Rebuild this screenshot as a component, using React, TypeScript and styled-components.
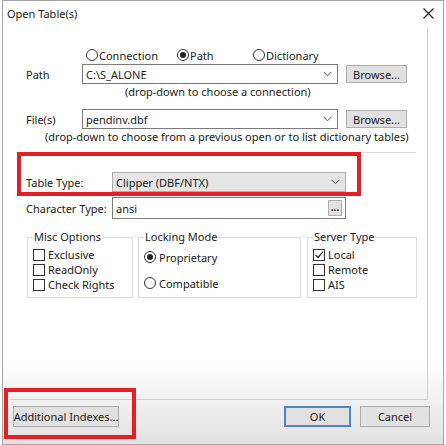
import React from 'react';
import styled, { createGlobalStyle } from 'styled-components';

const Global = createGlobalStyle`
  html, body { margin: 0; padding: 0; background: #fff; }
  body { font-family: "Noto Sans", "Open Sans", sans-serif; font-size: 11px; color: #1b1b1b; }
  * { box-sizing: border-box; }
`;

const Window = styled.div`
  position: relative;
  margin-left: 2px;
  width: 442px;
  height: 445px;
  border: 1px solid #a5a5a5;
  background: linear-gradient(to bottom, #fff 0, #fff 360px, #e1e1e1 444px);
  display: flex;
  flex-direction: column;
`;

const TitleBar = styled.div`
  height: 27px;
  display: flex;
  align-items: center;
  justify-content: space-between;
  padding: 0 9px 3px 4px;
  font-size: 11px;
`;

const Body = styled.div`
  display: flex;
  padding-left: 7px;
`;

const Panel = styled.div`
  width: 418px;
  height: 372px;
  border-right: 1px solid #cfcfcf;
  border-bottom: 1px solid #cfcfcf;
  display: flex;
  flex-direction: column;
`;

const RadioRow = styled.div`
  display: flex;
  align-items: center;
  height: 16px;
  margin-top: 19px;
  padding-left: 76px;
`;

const Option = styled.label<{ $w?: number }>`
  display: flex;
  align-items: center;
  gap: 1px;
  width: ${p => (p.$w ? `${p.$w}px` : 'auto')};
  height: 16px;
  white-space: nowrap;
`;

const Circle = styled.span<{ $on?: boolean }>`
  position: relative;
  width: 12px;
  height: 12px;
  border-radius: 50%;
  border: 1px solid #333;
  background: #fff;
  flex: none;
  &::after {
    content: '';
    display: ${p => (p.$on ? 'block' : 'none')};
    position: absolute;
    left: 2px;
    top: 2px;
    width: 6px;
    height: 6px;
    border-radius: 50%;
    background: #222;
  }
`;

const Box = styled.span`
  width: 12px;
  height: 12px;
  border: 1px solid #333;
  background: #fff;
  flex: none;
  display: flex;
  align-items: center;
  justify-content: center;
`;

const FieldRow = styled.div<{ $top: number; $h: number }>`
  display: flex;
  align-items: center;
  margin-top: ${p => p.$top}px;
  height: ${p => p.$h}px;
  padding-left: 16px;
`;

const Label = styled.span<{ $w: number }>`
  width: ${p => p.$w}px;
  flex: none;
  white-space: nowrap;
`;

const Combo = styled.div<{ $w: number; $gray?: boolean }>`
  width: ${p => p.$w}px;
  height: 100%;
  border: 1px solid ${p => (p.$gray ? '#adadad' : '#7a7a7a')};
  background: ${p => (p.$gray ? '#e5e5e5' : '#fff')};
  display: flex;
  align-items: center;
  justify-content: space-between;
  padding: 0 5px 0 3px;
  white-space: nowrap;
`;

const Button = styled.div<{ $w: number; $h: number; $primary?: boolean; $ml?: number }>`
  width: ${p => p.$w}px;
  height: ${p => p.$h}px;
  margin-left: ${p => p.$ml ?? 0}px;
  flex: none;
  border: ${p => (p.$primary ? '2px solid #4a86c8' : '1px solid #adadad')};
  background: #e1e1e1;
  display: flex;
  align-items: center;
  justify-content: center;
  white-space: nowrap;
`;

const Hint = styled.div<{ $left: number; $top: number }>`
  height: 16px;
  line-height: 16px;
  margin-top: ${p => p.$top}px;
  padding-left: ${p => p.$left}px;
  white-space: nowrap;
`;

const Separator = styled.div`
  height: 1px;
  background: #d9d9d9;
  margin: 7px 11px 0 6px;
`;

const Dots = styled.div`
  width: 14px;
  height: 16px;
  border: 1px solid #adadad;
  background: #e1e1e1;
  display: flex;
  align-items: center;
  justify-content: center;
  font-size: 10px;
  font-weight: bold;
  line-height: 1;
  padding-bottom: 3px;
  margin-right: -2px;
`;

const Groups = styled.div`
  display: flex;
  margin-top: 11px;
  padding-left: 17px;
`;

const Group = styled.fieldset<{ $w: number; $ml: number }>`
  width: ${p => p.$w}px;
  height: 68px;
  margin: 0 0 0 ${p => p.$ml}px;
  padding: 3px 0 0 5px;
  border: 1px solid #dcdcdc;
  display: flex;
  flex-direction: column;
  min-width: 0;
`;

const Legend = styled.legend`
  padding: 0 1px;
  margin-left: 0;
  font-size: 11px;
  line-height: 14px;
`;

const CheckItem = styled.label<{ $h: number; $mt?: number }>`
  display: flex;
  align-items: center;
  gap: 3px;
  height: ${p => p.$h}px;
  margin-top: ${p => p.$mt ?? 0}px;
  white-space: nowrap;
`;

const Footer = styled.div`
  display: flex;
  align-items: flex-start;
  padding: 6px 0 0 10px;
`;

const Spacer = styled.div`
  flex: 1;
`;

const FooterButtons = styled.div`
  display: flex;
  gap: 9px;
  padding-right: 13px;
`;

const RedBox = styled.div<{ $l: number; $t: number; $w: number; $h: number }>`
  position: absolute;
  left: ${p => p.$l}px;
  top: ${p => p.$t}px;
  width: ${p => p.$w}px;
  height: ${p => p.$h}px;
  border: 4px solid #e61f27;
  pointer-events: none;
`;

const Chevron = () => (
  <svg width="9" height="6" viewBox="0 0 9 6">
    <path d="M0.5 0.8 L4.5 4.8 L8.5 0.8" fill="none" stroke="#555" strokeWidth="1" />
  </svg>
);

const Close = () => (
  <svg width="11" height="11" viewBox="0 0 11 11">
    <path d="M0.5 0.5 L10.5 10.5 M10.5 0.5 L0.5 10.5" stroke="#222" strokeWidth="1.2" />
  </svg>
);

const Tick = () => (
  <svg width="10" height="10" viewBox="0 0 10 10">
    <path d="M1.5 5 L4 7.5 L8.8 1.8" fill="none" stroke="#222" strokeWidth="1.2" />
  </svg>
);

export default function App() {
  return (
    <>
      <Global />
      <Window>
        <TitleBar>
          <span>Open Table(s)</span>
          <Close />
        </TitleBar>
        <Body>
          <Panel>
            <RadioRow>
              <Option $w={91}><Circle />Connection</Option>
              <Option $w={76}><Circle $on />Path</Option>
              <Option><Circle />Dictionary</Option>
            </RadioRow>
            <FieldRow $top={1} $h={20}>
              <Label $w={56}>Path</Label>
              <Combo $w={256}>C:\S_ALONE<Chevron /></Combo>
              <Button $w={61} $h={18} $ml={8}>Browse...</Button>
            </FieldRow>
            <Hint $left={115} $top={0}>(drop-down to choose a connection)</Hint>
            <FieldRow $top={9} $h={20}>
              <Label $w={56}>File(s)</Label>
              <Combo $w={256}>pendinv.dbf<Chevron /></Combo>
              <Button $w={61} $h={18} $ml={8}>Browse...</Button>
            </FieldRow>
            <Hint $left={35} $top={0}>(drop-down to choose from a previous open or to list dictionary tables)</Hint>
            <Separator />
            <FieldRow $top={19} $h={20}>
              <Label $w={86}>Table Type:</Label>
              <Combo $w={234} $gray>Clipper (DBF/NTX)<Chevron /></Combo>
            </FieldRow>
            <FieldRow $top={5} $h={22}>
              <Label $w={86}>Character Type:</Label>
              <Combo $w={234}>ansi<Dots>...</Dots></Combo>
            </FieldRow>
            <Groups>
              <Group $w={106} $ml={0}>
                <Legend>Misc Options</Legend>
                <CheckItem $h={15}><Box />Exclusive</CheckItem>
                <CheckItem $h={15}><Box />ReadOnly</CheckItem>
                <CheckItem $h={15}><Box />Check Rights</CheckItem>
              </Group>
              <Group $w={163} $ml={5}>
                <Legend>Locking Mode</Legend>
                <CheckItem $h={20} $mt={0}><Circle $on />Proprietary</CheckItem>
                <CheckItem $h={20} $mt={6}><Circle />Compatible</CheckItem>
              </Group>
              <Group $w={110} $ml={6}>
                <Legend>Server Type</Legend>
                <CheckItem $h={15}><Box><Tick /></Box>Local</CheckItem>
                <CheckItem $h={15}><Box />Remote</CheckItem>
                <CheckItem $h={15}><Box />AIS</CheckItem>
              </Group>
            </Groups>
          </Panel>
        </Body>
        <Footer>
          <Button $w={106} $h={21}>Additional Indexes...</Button>
          <Spacer />
          <FooterButtons>
            <Button $w={67} $h={21} $primary>OK</Button>
            <Button $w={70} $h={21}>Cancel</Button>
          </FooterButtons>
        </Footer>
        <RedBox $l={14} $t={151} $w={344} $h={44} />
        <RedBox $l={1} $t={387} $w={132} $h={51} />
      </Window>
    </>
  );
}
